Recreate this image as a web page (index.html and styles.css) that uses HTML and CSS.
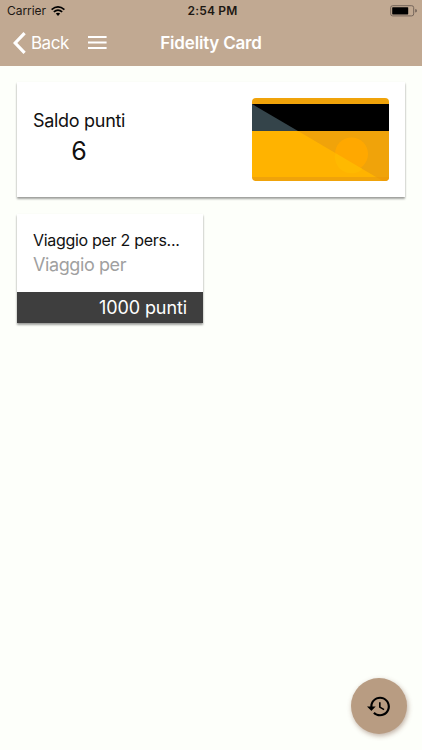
FILE: index.html
```html
<!DOCTYPE html>
<html lang="it">
<head>
    <meta charset="UTF-8">
    <meta name="viewport" content="width=device-width, initial-scale=1.0">
    <title>Fidelity Card</title>
    <link rel="stylesheet" href="styles.css">
</head>
<body>
    <header class="header">
        <div class="status-bar">
            <div class="status-left">
                <span class="carrier">Carrier</span>
                <svg class="wifi" width="14" height="10" viewBox="0 0 14 10">
                    <path d="M0.6 3.6 Q7 -1.8 13.4 3.6" fill="none" stroke="#000" stroke-width="1.7"/>
                    <path d="M2.8 5.9 Q7 2.3 11.2 5.9" fill="none" stroke="#000" stroke-width="1.6"/>
                    <path d="M4.8 7.6 Q7 5.7 9.2 7.6 L7 9.9 Z"/>
                </svg>
            </div>
            <span class="clock">2:54 PM</span>
            <svg class="battery" width="28" height="12" viewBox="0 0 28 12">
                <rect x="0.7" y="0.7" width="23" height="10.2" rx="2" fill="none" stroke="#75655a" stroke-width="1"/>
                <rect x="2.2" y="2.2" width="16" height="7.2" rx="0.6"/>
                <path d="M25.2 4 Q27 4.3 27 5.8 T25.2 7.6 Z" fill="#75655a"/>
            </svg>
        </div>
        <nav class="nav-bar">
            <div class="nav-left">
                <button class="back-btn">
                    <svg width="14" height="22" viewBox="0 0 14 22">
                        <path d="M11.6 1.2 L2.2 11 L11.6 20.8" fill="none" stroke="#fff" stroke-width="3.2"/>
                    </svg>
                    <span>Back</span>
                </button>
                <button class="menu-btn">
                    <svg width="19" height="13" viewBox="0 0 19 13">
                        <path d="M0 1.1H18.6M0 6.5H18.6M0 11.9H18.6" stroke="#fff" stroke-width="2"/>
                    </svg>
                </button>
            </div>
            <h1 class="nav-title">Fidelity Card</h1>
        </nav>
    </header>

    <main class="content">
        <section class="card balance-card">
            <div class="balance">
                <span class="balance-label">Saldo punti</span>
                <span class="balance-value">6</span>
            </div>
            <svg class="card-image" width="137" height="83" viewBox="0 0 137 83">
                <clipPath id="cardShape"><rect width="137" height="83" rx="4"/></clipPath>
                <g clip-path="url(#cardShape)">
                    <rect width="137" height="83" fill="#f0a30a"/>
                    <rect y="6" width="137" height="27" fill="#000"/>
                    <path d="M0 6 L46 33 H0 Z" fill="#34444a"/>
                    <path d="M0 33 H46 L124 79 H0 Z" fill="#ffb300"/>
                    <path d="M124 79 L131 83 H137 V79 Z" fill="#ee9c08"/>
                    <circle cx="99.5" cy="56" r="16.5" fill="#ffa800"/>
                    <path d="M84.2 55.4 L110.5 70.9 A16.5 16.5 0 0 1 83.2 55 Z" fill="#ffb900"/>
                </g>
            </svg>
        </section>

        <section class="card reward-card">
            <div class="reward-body">
                <h2 class="reward-title">Viaggio per 2 pers...</h2>
                <p class="reward-text">Viaggio per</p>
            </div>
            <div class="reward-points">1000 punti</div>
        </section>
    </main>

    <button class="history-btn">
        <svg width="24" height="21" viewBox="1 3 22 18">
            <path d="M13 3c-4.970 0-9 4.030-9 9H1l3.890 3.890.070.140L9 12H6c0-3.870 3.130-7 7-7s7 3.130 7 7-3.130 7-7 7c-1.930 0-3.680-.790-4.940-2.060l-1.420 1.420C8.270 19.990 10.510 21 13 21c4.970 0 9-4.030 9-9s-4.030-9-9-9zm-1 5v5l4.280 2.540.720-1.210-3.500-2.080V8H12z"/>
        </svg>
    </button>
</body>
</html>
```

FILE: styles.css
```css
* {
    box-sizing: border-box;
}

body {
    font-family: Inter, "Liberation Sans", sans-serif;
    margin: 0;
    height: 100vh;
    overflow: hidden;
    background-color: #FDFFFA;
    color: #111;
}

button {
    background: none;
    border: 0;
    padding: 0;
    font-family: inherit;
    cursor: pointer;
}

svg {
    display: block;
}

.header {
    height: 66px;
    background-color: #C1A992;
}

.status-bar {
    display: grid;
    grid-template-columns: 1fr auto 1fr;
    align-items: center;
    height: 21px;
    padding: 0 4px 0 7px;
    color: #1d1813;
}

.status-left {
    display: flex;
    align-items: center;
    gap: 5px;
}

.carrier {
    font-size: 12px;
    letter-spacing: -0.05px;
}

.clock {
    font-size: 12px;
    font-weight: 600;
    letter-spacing: 0.2px;
}

.battery {
    justify-self: end;
}

.nav-bar {
    display: grid;
    grid-template-columns: 1fr auto 1fr;
    align-items: center;
    height: 43px;
    padding: 0 13px;
    color: white;
}

.nav-left {
    display: flex;
    align-items: center;
    gap: 19px;
}

.back-btn {
    display: flex;
    align-items: center;
    gap: 4px;
    color: white;
    font-size: 17px;
    letter-spacing: -0.5px;
}

.nav-title {
    margin: 0;
    font-size: 17px;
    font-weight: 600;
    letter-spacing: -0.2px;
}

.content {
    display: flex;
    flex-direction: column;
    align-items: flex-start;
    gap: 17px;
    padding: 16px 17px;
}

.card {
    background-color: white;
    box-shadow: 0 2px 2px rgba(0, 0, 0, 0.32), 0 1px 2px rgba(0, 0, 0, 0.12);
}

.balance-card {
    display: flex;
    justify-content: space-between;
    align-items: flex-start;
    width: 100%;
    height: 115px;
    padding: 16px;
}

.balance {
    display: flex;
    flex-direction: column;
    align-items: center;
    padding-top: 10px;
}

.balance-label {
    font-size: 18px;
    line-height: 26px;
    letter-spacing: -0.3px;
}

.balance-value {
    font-size: 25px;
    line-height: 34px;
}

.reward-card {
    width: 186px;
}

.reward-body {
    height: 78px;
    padding: 14px 0 0 16px;
}

.reward-title {
    margin: 0;
    font-size: 16px;
    font-weight: 400;
    line-height: 24px;
    letter-spacing: -0.3px;
    white-space: nowrap;
}

.reward-text {
    margin: 0;
    color: #A0A0A0;
    font-size: 18px;
    line-height: 26px;
    letter-spacing: -0.4px;
}

.reward-points {
    height: 31px;
    padding-right: 16px;
    background-color: #3E3E3E;
    color: white;
    font-size: 18px;
    line-height: 31px;
    letter-spacing: -0.1px;
    text-align: right;
}

/* Floating button over the page */
.history-btn {
    position: absolute;
    right: 15px;
    bottom: 16px;
    display: flex;
    align-items: center;
    justify-content: center;
    width: 56px;
    height: 56px;
    border-radius: 50%;
    background-color: #B89C82;
    box-shadow: 1px 2px 5px rgba(120, 80, 60, 0.45);
}
```
